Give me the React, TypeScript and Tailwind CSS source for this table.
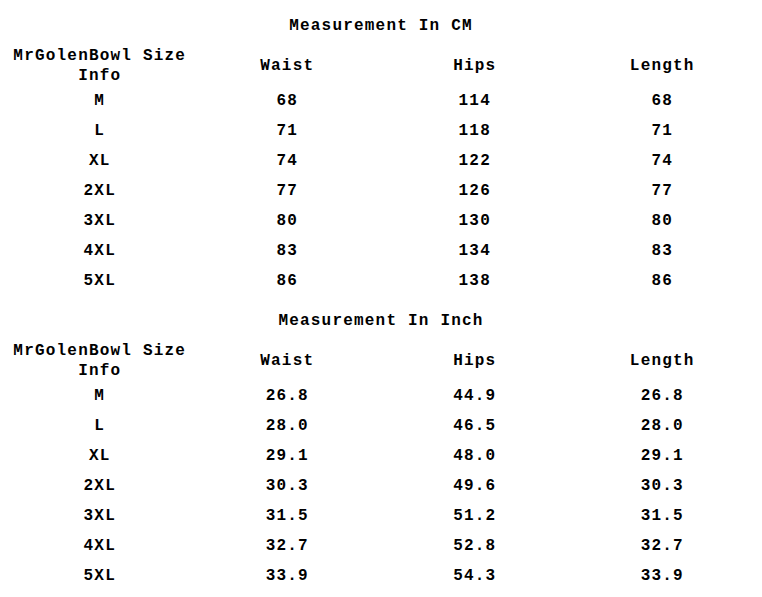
const cm = [
  ['M', '68', '114', '68'],
  ['L', '71', '118', '71'],
  ['XL', '74', '122', '74'],
  ['2XL', '77', '126', '77'],
  ['3XL', '80', '130', '80'],
  ['4XL', '83', '134', '83'],
  ['5XL', '86', '138', '86'],
]

const inch = [
  ['M', '26.8', '44.9', '26.8'],
  ['L', '28.0', '46.5', '28.0'],
  ['XL', '29.1', '48.0', '29.1'],
  ['2XL', '30.3', '49.6', '30.3'],
  ['3XL', '31.5', '51.2', '31.5'],
  ['4XL', '32.7', '52.8', '32.7'],
  ['5XL', '33.9', '54.3', '33.9'],
]

function SizeTable({ title, rows }: { title: string; rows: string[][] }) {
  return (
    <div>
      <div className="h-5 leading-5 text-center">{title}</div>
      <div className="mt-[10px] ml-[6px] w-[750px]">
        {/* header */}
        <div className="grid grid-cols-4 h-10 items-center text-center">
          <div className="leading-5">
            MrGolenBowl Size
            <br />
            Info
          </div>
          <div>Waist</div>
          <div>Hips</div>
          <div>Length</div>
        </div>
        {rows.map(r => (
          <div key={r[0]} className="grid grid-cols-4 h-[30px] items-center text-center">
            {r.map((v, i) => (
              <div key={i}>{v}</div>
            ))}
          </div>
        ))}
      </div>
    </div>
  )
}

export default function App() {
  return (
    <div
      className="w-[762px] h-[597px] bg-white text-black font-bold text-[16px] tracking-[1.2px] pt-[16px] flex flex-col gap-[15px]"
      style={{ fontFamily: '"Liberation Mono", "Courier New", monospace' }}
    >
      <SizeTable title="Measurement In CM" rows={cm} />
      <SizeTable title="Measurement In Inch" rows={inch} />
    </div>
  )
}
